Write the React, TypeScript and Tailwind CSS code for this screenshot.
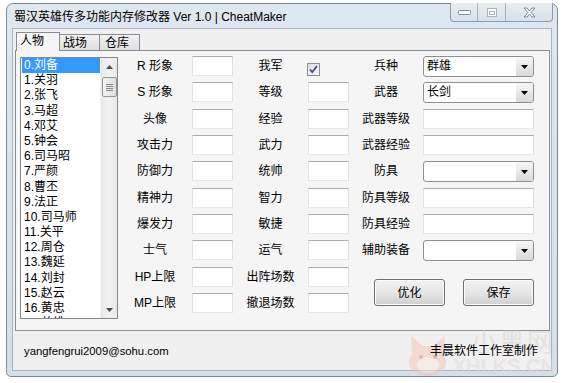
const font = "font-['Liberation_Sans','Noto_Sans_CJK_SC',sans-serif]";

const heroes = [
  "0.刘备", "1.关羽", "2.张飞", "3.马超", "4.邓艾", "5.钟会", "6.司马昭", "7.严颜", "8.曹丕",
  "9.法正", "10.司马师", "11.关平", "12.周仓", "13.魏延", "14.刘封", "15.赵云", "16.黄忠", "17.姜维",
];

function TextBox() {
  return <div className="h-[20px] border border-[#abadb3] border-l-[#e2e3ea] border-r-[#dbdfe6] border-b-[#e3e9ef] bg-white" />;
}

function Arrow() {
  return (
    <svg width="7" height="4" viewBox="0 0 7 4">
      <path d="M0 0h7L3.5 4z" fill="#000" />
    </svg>
  );
}

function Combo({ value }: { value?: string }) {
  return (
    <div className="h-[21px] flex rounded-[3px] border border-[#8e8f8f] bg-white overflow-hidden">
      <div className="flex-1 pl-[3px] text-[12px] leading-[19px] text-black">{value}</div>
      <div className="w-[17px] flex items-center justify-center bg-gradient-to-b from-[#f7f7f7] to-[#d9d9d9]">
        <Arrow />
      </div>
    </div>
  );
}

function Label({ text }: { text: string }) {
  return <div className="text-center text-[12px] leading-[21px] text-black">{text}</div>;
}

function Button({ text }: { text: string }) {
  return (
    <div className="w-[71px] h-[27px] rounded-[3px] border border-[#707070] bg-gradient-to-b from-[#f2f2f2] via-[#e6e6e6] to-[#cfcfcf] flex items-center justify-center text-[12px] text-black shadow-[inset_0_0_0_1px_#fcfcfc]">
      {text}
    </div>
  );
}

function CaptionButtons() {
  return (
    <div className="flex h-[19px] self-start -mt-[1px] mr-[4px] rounded-b-[4px] border border-t-0 border-[#8c9aab] bg-gradient-to-b from-[#e9eef4] to-[#d9e1ea] overflow-hidden">
      <div className="w-[27px] flex items-center justify-center border-r border-[#a5b1bf]">
        <svg width="13" height="6" viewBox="0 0 13 6">
          <rect x="0.5" y="1.5" width="12" height="4" rx="1" fill="#fff" stroke="#7d8898" />
        </svg>
      </div>
      <div className="w-[28px] flex items-center justify-center border-r border-[#a5b1bf]">
        <svg width="10" height="9" viewBox="0 0 10 9">
          <rect x="0.5" y="0.5" width="9" height="8" fill="#fff" stroke="#aab3bf" />
          <rect x="2.5" y="3.5" width="5" height="3" fill="none" stroke="#aab3bf" />
        </svg>
      </div>
      <div className="w-[46px] flex items-center justify-center">
        <svg width="13" height="11" viewBox="0 0 13 11">
          <path d="M1 1h3l2.5 3L9 1h3L8 5.5 12 10H9L6.5 7 4 10H1l4-4.5z" fill="#fff" stroke="#7d8898" strokeLinejoin="round" />
        </svg>
      </div>
    </div>
  );
}

function ListBox() {
  return (
    <div className="w-[98px] h-[262px] mt-[1px] flex border border-[#828790] bg-white">
      <div className="flex-1 overflow-hidden pl-[1px]">
        {heroes.map((h, i) => (
          <div
            key={h}
            className={
              i === 0
                ? "h-[15.2px] leading-[15.2px] pl-[2px] text-[12px] bg-[#3399ff] text-white whitespace-nowrap"
                : "h-[15.2px] leading-[15.2px] pl-[2px] text-[12px] text-black whitespace-nowrap"
            }
          >
            {h}
          </div>
        ))}
      </div>
      <div className="w-[17px] flex flex-col items-center bg-gradient-to-r from-[#e8e8e8] via-[#f2f2f2] to-[#e8e8e8] border-l border-[#f4f4f4]">
        <div className="h-[17px] flex items-center justify-center">
          <svg width="7" height="4" viewBox="0 0 7 4">
            <path d="M0 4h7L3.5 0z" fill="#4d4d4d" />
          </svg>
        </div>
        <div className="w-[15px] h-[20px] mt-[2px] rounded-[2px] border border-[#959595] bg-gradient-to-r from-[#f3f3f3] to-[#dedede] flex flex-col items-center justify-center gap-[1px]">
          <div className="w-[7px] h-[1px] bg-[#888]" />
          <div className="w-[7px] h-[1px] bg-[#888]" />
          <div className="w-[7px] h-[1px] bg-[#888]" />
          <div className="w-[7px] h-[1px] bg-[#888]" />
        </div>
        <div className="flex-1" />
        <div className="h-[17px] flex items-center justify-center">
          <svg width="7" height="4" viewBox="0 0 7 4">
            <path d="M0 0h7L3.5 4z" fill="#4d4d4d" />
          </svg>
        </div>
      </div>
    </div>
  );
}

function Checkbox() {
  return (
    <div className="pt-[7px] -ml-[1px]">
      <div className="w-[13px] h-[13px] border border-[#8e8f8f] bg-gradient-to-br from-[#dcdcdc] to-[#f8f8f8] flex items-center justify-center">
        <svg width="9" height="9" viewBox="0 0 9 9">
          <path d="M1 4.5l2.3 2.6L8 1" fill="none" stroke="#3c4f8a" strokeWidth="1.8" />
        </svg>
      </div>
    </div>
  );
}

export default function App() {
  return (
    <div className={`w-[566px] h-[383px] bg-white pt-[3px] pl-[6px] ${font}`}>
      <div className="w-[552px] h-[374px] flex flex-col rounded-t-[7px] rounded-b-[5px] border border-[#7c8a9b] bg-gradient-to-b from-[#dfe7f0] to-[#d5dfea] px-[5px] pb-[5px] relative">
        <div className="h-[24px] flex items-center -mr-[5px]">
          <div className="flex-1 pl-[2px] pt-[2px] text-[12px] text-black whitespace-nowrap">蜀汉英雄传多功能内存修改器 Ver 1.0 | CheatMaker</div>
          <CaptionButtons />
        </div>
        <div className="flex-1 flex flex-col border border-[#a6b3c2] bg-[#f0f0f0]">
          <div className="h-[21px] flex items-end pl-[3px] pt-[3px]">
            <div className="relative z-10 -mb-[1px] w-[44px] h-[19px] border border-b-0 border-[#898c95] bg-[#f5f5f5] pl-[3px] text-[12px] leading-[17px] text-black">
              人物
            </div>
            <div className="w-[41px] h-[16px] -ml-[1px] border border-b-0 border-[#898c95] bg-gradient-to-b from-[#f2f2f2] to-[#dfdfdf] pl-[3px] text-[12px] leading-[16px] text-black">
              战场
            </div>
            <div className="w-[41px] h-[16px] -ml-[1px] border border-b-0 border-[#898c95] bg-gradient-to-b from-[#f2f2f2] to-[#dfdfdf] pl-[5px] text-[12px] leading-[16px] text-black">
              仓库
            </div>
          </div>
          <div className="ml-[2px] w-[535px] h-[281px] border border-[#898c95] bg-[#f5f5f5] flex items-start pl-[4px] pt-[5px]">
            <ListBox />
            <div className="grid grid-cols-[74px_41px_75px_41px_74px_111px] auto-rows-[20px] gap-y-[6.33px]">
              <Label text="R 形象" />
              <TextBox />
              <Label text="我军" />
              <Checkbox />
              <Label text="兵种" />
              <Combo value="群雄" />

              <Label text="S 形象" />
              <TextBox />
              <Label text="等级" />
              <TextBox />
              <Label text="武器" />
              <Combo value="长剑" />

              <Label text="头像" />
              <TextBox />
              <Label text="经验" />
              <TextBox />
              <Label text="武器等级" />
              <TextBox />

              <Label text="攻击力" />
              <TextBox />
              <Label text="武力" />
              <TextBox />
              <Label text="武器经验" />
              <TextBox />

              <Label text="防御力" />
              <TextBox />
              <Label text="统帅" />
              <TextBox />
              <Label text="防具" />
              <Combo />

              <Label text="精神力" />
              <TextBox />
              <Label text="智力" />
              <TextBox />
              <Label text="防具等级" />
              <TextBox />

              <Label text="爆发力" />
              <TextBox />
              <Label text="敏捷" />
              <TextBox />
              <Label text="防具经验" />
              <TextBox />

              <Label text="士气" />
              <TextBox />
              <Label text="运气" />
              <TextBox />
              <Label text="辅助装备" />
              <Combo />

              <Label text="HP上限" />
              <TextBox />
              <Label text="出阵场数" />
              <TextBox />
              <div className="col-span-2 row-span-2 flex items-center justify-end gap-[18px] pt-[6px]">
                <Button text="优化" />
                <Button text="保存" />
              </div>

              <Label text="MP上限" />
              <TextBox />
              <Label text="撤退场数" />
              <TextBox />
            </div>
          </div>
          <div className="flex-1 flex items-center justify-between pl-[11px] pr-[13px] pt-[1px] relative">
            <span className="text-[11.3px] text-black">yangfengrui2009@sohu.com</span>
            <span className="relative z-10 text-[12px] text-black">丰晨软件工作室制作</span>
            <div className="absolute right-[-4px] bottom-[-6px] flex items-end gap-[2px] opacity-50 pointer-events-none">
              <svg width="46" height="44" viewBox="0 0 46 44">
                <path d="M6 4l12 10h10l12-10-2 18c3 4 4 9 2 13-3 6-10 9-17 9S8 41 5 35c-2-4-1-9 2-13z" fill="#f2c6b4" />
                <ellipse cx="23" cy="33" rx="11" ry="8" fill="#fbe9e2" />
                <circle cx="16" cy="25" r="2" fill="#b98a7a" />
                <circle cx="30" cy="25" r="2" fill="#b98a7a" />
              </svg>
              <div className="flex flex-col items-end leading-none">
                <span className="text-[26px] text-[#d9d4d4] tracking-[2px]">小黑网</span>
                <span className="text-[20px] font-bold text-[#e3d9d9]">XHLKS.CN</span>
              </div>
            </div>
          </div>
        </div>
      </div>
    </div>
  );
}
